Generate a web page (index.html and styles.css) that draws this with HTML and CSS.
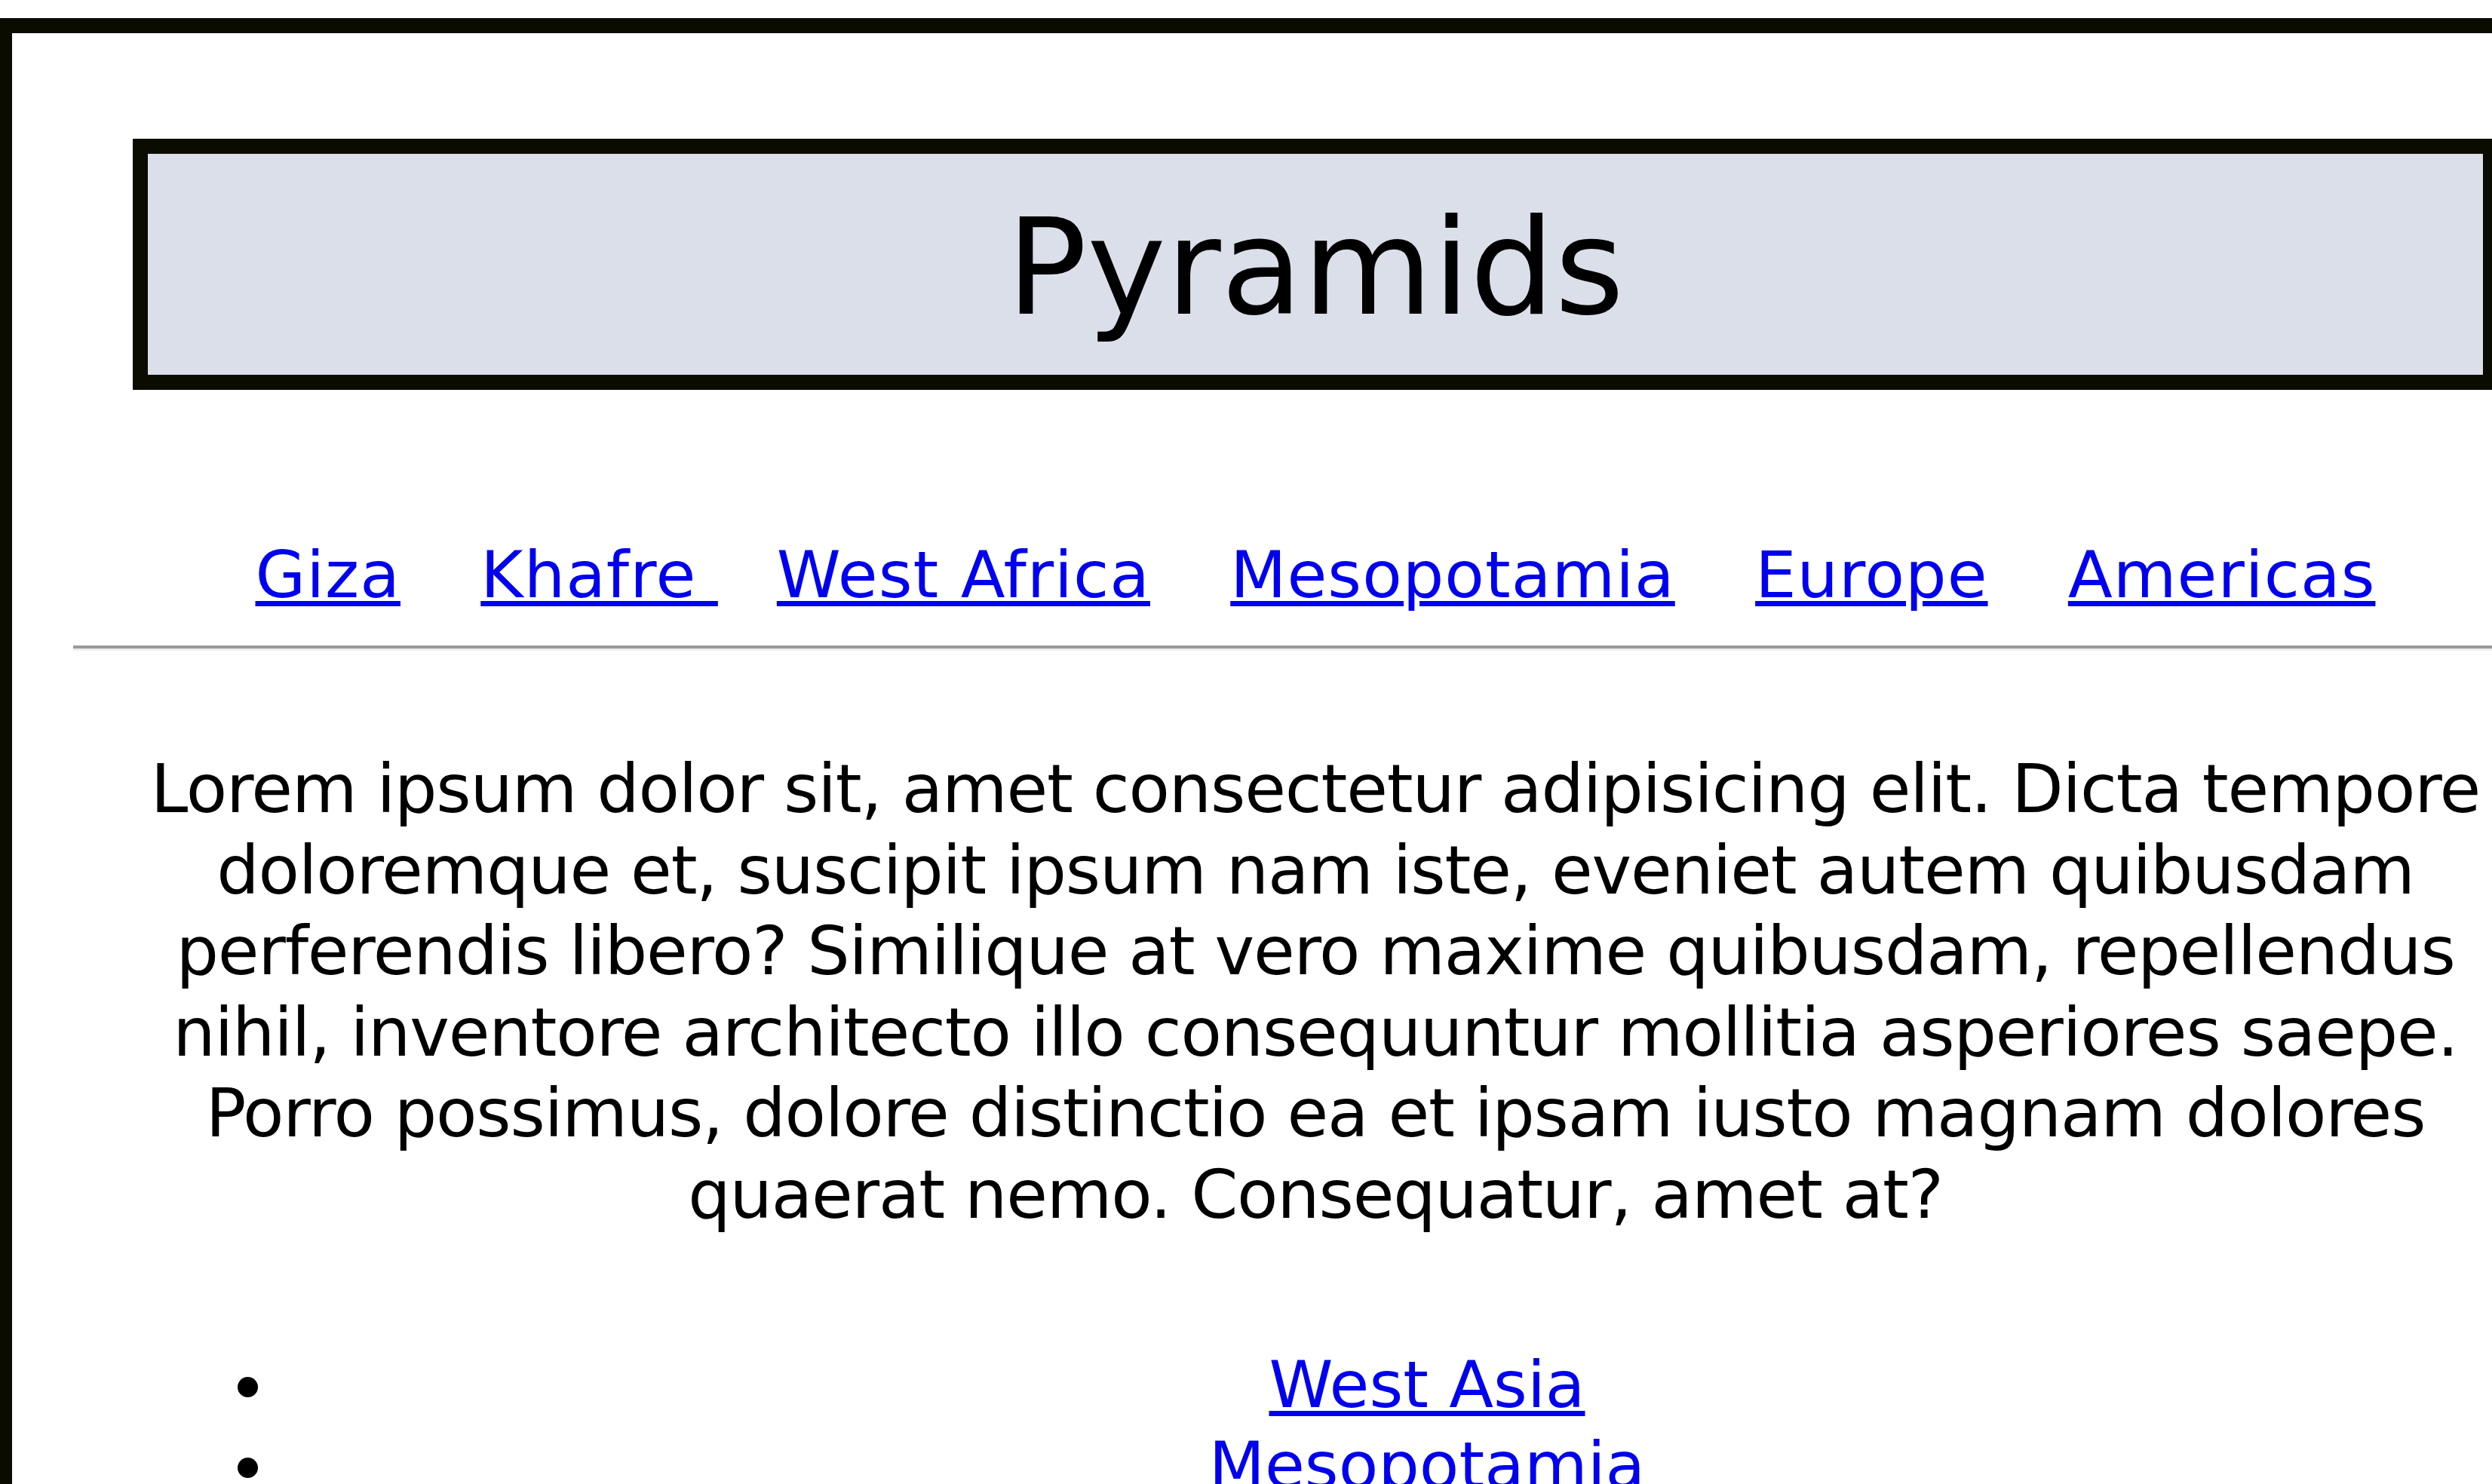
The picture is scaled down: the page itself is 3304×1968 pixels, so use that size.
FILE: index.html
```html
<!DOCTYPE html>
<html lang="en">
<head>
<meta charset="utf-8">
<title>Pyramids</title>
<link rel="stylesheet" href="styles.css">
</head>
<body>
<div class="page">
  <header class="banner">
    <h1 class="title">Pyramids</h1>
  </header>
  <nav class="nav"><a href="#">Giza</a> <a href="#">Khafre </a> <a href="#">West Africa</a> <a href="#">Mesopotamia</a> <a href="#">Europe</a> <a href="#">Americas</a></nav>
  <hr class="rule">
  <p class="intro">Lorem ipsum dolor sit, amet consectetur adipisicing elit. Dicta tempore doloremque et, suscipit ipsum nam iste, eveniet autem quibusdam perferendis libero? Similique at vero maxime quibusdam, repellendus nihil, inventore architecto illo consequuntur mollitia asperiores saepe. Porro possimus, dolore distinctio ea et ipsam iusto magnam dolores quaerat nemo. Consequatur, amet at?</p>
  <ul class="regions">
    <li><a href="#">West Asia</a></li>
    <li><a href="#">Mesopotamia</a></li>
    <li><a href="#">Europe</a></li>
  </ul>
</div>
</body>
</html>
```

FILE: styles.css
```css
html {
  overflow: hidden;
}

body {
  margin: 0;
  background: #ffffff;
  color: #000000;
  font-family: "DejaVu Sans", "Liberation Sans", sans-serif;
}

.page {
  box-sizing: content-box;
  width: 3456px;
  margin: 24px 0 0 -4px;
  border: 20px solid #0b0c00;
  padding-top: 140px;
  min-height: 2200px;
}

.banner {
  margin: 0 160px;
  border: 20px solid #0b0c00;
  background: #dbdfea;
  padding: 63px 0 53px;
  text-align: center;
}

.title {
  margin: 0;
  font-size: 177px;
  font-weight: 400;
  line-height: 177px;
}

a {
  color: #0000ee;
  text-decoration: underline;
  text-decoration-thickness: 7px;
  text-underline-offset: 5px;
}

.nav {
  margin-top: 195px;
  text-align: center;
  font-size: 86px;
  line-height: 100px;
  letter-spacing: 1px;
}

.nav a {
  margin: 0 39px;
}

.rule {
  height: 0;
  margin: 44px 81px 0;
  border: 0;
  border-top: 4px solid #9a9a9a;
  border-bottom: 3px solid #eeeeee;
}

.intro {
  margin: 130px 136px 0;
  text-align: center;
  font-size: 89px;
  line-height: 107.5px;
  letter-spacing: -1.2px;
}

.regions {
  margin: 145px 63px 0 0;
  padding-left: 359px;
  font-size: 86px;
  line-height: 107px;
  text-align: center;
}
```
